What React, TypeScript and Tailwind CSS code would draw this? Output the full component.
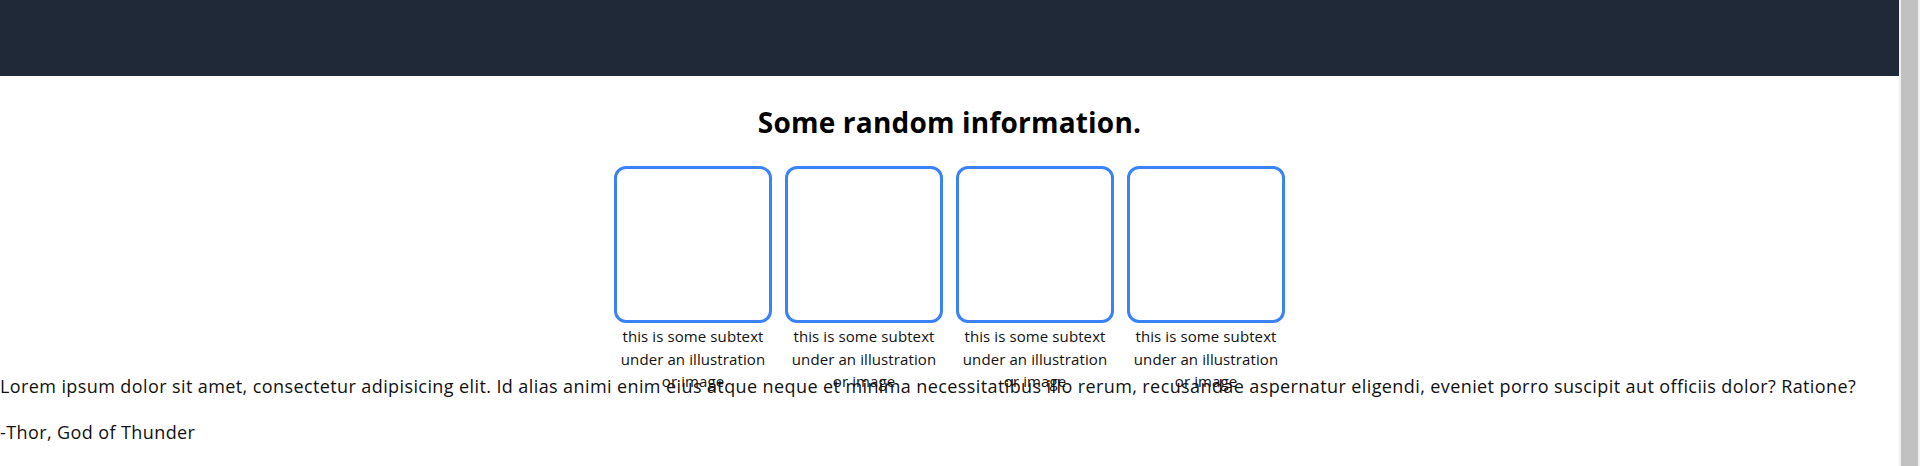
const cards = [1, 2, 3, 4]

export default function App() {
  return (
    <div className="flex h-[466px] overflow-hidden bg-white text-[#111] font-['Open_Sans',sans-serif]">
      <div className="min-w-0 flex-1">
        <header className="h-19 bg-[#1f2937]" />
        <main>
          <h1 className="pt-[25px] text-center text-[28px] leading-[42px] font-bold tracking-[0.2px] text-black">
            Some random information.
          </h1>
          <div className="mt-[23px] flex h-[206px] justify-center gap-[13px]">
            {cards.map((n) => (
              <div key={n} className="w-[158px]">
                <div className="h-[157px] w-full rounded-xl border-3 border-[#3b82f6]" />
                <p className="mt-[2px] text-center text-[15px] leading-[22.5px] tracking-[0.1px]">
                  this is some subtext under an illustration or image
                </p>
              </div>
            ))}
          </div>
          <p className="text-lg leading-7 tracking-[0.4px]">
            Lorem ipsum dolor sit amet, consectetur adipisicing elit. Id alias animi enim eius atque neque et minima
            necessitatibus illo rerum, recusandae aspernatur eligendi, eveniet porro suscipit aut officiis dolor? Ratione?
          </p>
          <p className="mt-[18px] text-lg leading-7 tracking-[0.4px]">-Thor, God of Thunder</p>
        </main>
      </div>
      {/* fake scrollbar, as in the screenshot */}
      <aside className="w-[21px] shrink-0 bg-[#f1f1f1] px-[2px]">
        <div className="h-full bg-[#c1c1c1]" />
      </aside>
    </div>
  )
}
